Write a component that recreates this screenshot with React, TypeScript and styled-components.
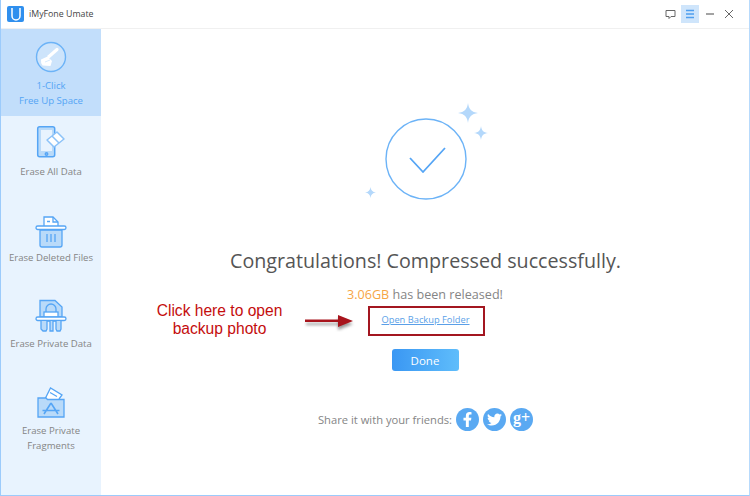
import React from "react";
import styled, { createGlobalStyle } from "styled-components";
import { FaFacebookF, FaTwitter } from "react-icons/fa";

const Global = createGlobalStyle`
  html, body { margin: 0; padding: 0; background: #fff; }
  body { font-family: "Open Sans", "Noto Sans", sans-serif; }
`;

const Window = styled.div`
  position: relative;
  width: 750px;
  height: 496px;
  box-sizing: border-box;
  border: 1px solid #9ccbfb;
  border-top: 0;
  border-right: 1px solid #b7dafc;
  display: flex;
  flex-direction: column;
  overflow: hidden;
  background: #fff;
`;
const TitleBar = styled.div`
  height: 29px;
  flex: none;
  display: flex;
  align-items: center;
  padding: 0 11px 0 6px;
  border-bottom: 1px solid #f0f0f0;
  box-sizing: border-box;
`;
const Logo = styled.div`
  width: 17px;
  height: 16px;
  border-radius: 2px;
  background: #2f8fee;
  display: flex;
  align-items: center;
  justify-content: center;
`;
const AppName = styled.span`
  margin-left: 5px;
  font-size: 8.8px;
  color: #444;
`;
const Controls = styled.div`
  margin-left: auto;
  display: flex;
  align-items: center;
  gap: 1.5px;
`;
const ControlButton = styled.div<{ $active?: boolean }>`
  width: 18px;
  height: 18px;
  display: flex;
  align-items: center;
  justify-content: center;
  background: ${(p) => (p.$active ? "#cfe5fb" : "transparent")};
`;
const Body = styled.div`
  flex: 1;
  display: flex;
  min-height: 0;
`;
const Sidebar = styled.nav`
  width: 100px;
  flex: none;
  background: #e8f3fe;
  display: flex;
  flex-direction: column;
`;
const NavItem = styled.div<{ $active?: boolean; $h: number; $top: number }>`
  height: ${(p) => p.$h}px;
  padding-top: ${(p) => p.$top}px;
  box-sizing: border-box;
  background: ${(p) => (p.$active ? "#c2defb" : "transparent")};
  color: ${(p) => (p.$active ? "#55a5f5" : "#858585")};
  display: flex;
  flex-direction: column;
  align-items: center;
`;
const NavIcon = styled.div<{ $gap: number }>`
  height: 34px;
  display: flex;
  align-items: center;
  justify-content: center;
  margin-bottom: ${(p) => p.$gap}px;
`;
const NavLabel = styled.div`
  font-size: 9.6px;
  line-height: 14.5px;
  text-align: center;
  white-space: nowrap;
`;
const Main = styled.main`
  flex: 1;
  display: flex;
  flex-direction: column;
  align-items: center;
  padding-top: 71px;
`;
const Hero = styled.div`
  height: 103px;
  display: flex;
  justify-content: center;
`;
const Title = styled.h1`
  margin: 44px 0 0 1px;
  font-size: 19.7px;
  line-height: 28px;
  font-weight: 400;
  color: #555;
`;
const Released = styled.div`
  margin-top: 11px;
  font-size: 12.6px;
  line-height: 17px;
  color: #858585;
`;
const Amount = styled.span`
  color: #f6a545;
`;
const BackupLink = styled.a`
  margin-top: 2px;
  padding-left: 1px;
  box-sizing: border-box;
  width: 116px;
  height: 29px;
  display: flex;
  align-items: center;
  justify-content: center;
  font-size: 9.3px;
  color: #5a9fe8;
  text-decoration: underline;
  white-space: nowrap;
`;
const DoneButton = styled.button`
  margin-top: 15px;
  width: 67px;
  height: 22px;
  border: 0;
  border-radius: 3px;
  padding: 0;
  background: linear-gradient(90deg, #3a97f3, #5fbdfb);
  color: #fff;
  font: 11.5px "Open Sans", sans-serif;
`;
const Share = styled.div`
  margin: 37px 0 0 1px;
  display: flex;
  align-items: center;
  gap: 4px;
  font-size: 11.2px;
  color: #858585;
`;
const ShareIcon = styled.div<{ $size?: number }>`
  width: 23px;
  height: 23px;
  border-radius: 50%;
  background: #5aa9f2;
  color: #fff;
  display: flex;
  align-items: center;
  justify-content: center;
  font-size: ${(p) => p.$size ?? 14}px;
`;
const GooglePlus = styled.span`
  font-family: "Liberation Serif", serif;
  font-weight: 700;
  font-size: 16px;
  line-height: 1;
  margin-top: -3px;
`;
const Annotation = styled.div`
  position: absolute;
  left: 149px;
  top: 302px;
  width: 139px;
  text-align: center;
  font-family: "Liberation Sans", Arial, sans-serif;
  font-size: 15.6px;
  line-height: 18px;
  color: #c40d0d;
`;
const Arrow = styled.svg`
  position: absolute;
  left: 303px;
  top: 308px;
`;
const Callout = styled.div`
  position: absolute;
  left: 367px;
  top: 306px;
  width: 117px;
  height: 30px;
  box-sizing: border-box;
  border: 2px solid #a31620;
`;

const blue = "#55a5f5";
const fill = "#b9daf9";

const items = [
  { l: ["1-Click", "Free Up Space"], h: 87, t: 11, g: 5, active: true, icon: (
    <svg width="32" height="32" viewBox="0 0 32 32" fill="none" stroke="#6cb3f7" strokeWidth="1.4">
      <circle cx="16" cy="16" r="14.500" fill="#cde4fb" />
      <path d="M14 15.500 22 8.500" stroke="#fff" strokeWidth="3.200" strokeLinecap="round" />
      <path d="M6 18.500 12.500 15.500 17 20 15.500 25 7.500 24.500Q5.500 22 6 18.500z" fill="#fff" stroke="none" />
      <path d="M10 21l5-2" stroke="#cde4fb" strokeWidth="0.800" />
    </svg>
  ) },
  { l: ["Erase All Data"], h: 86, t: 9, g: 6, icon: (
    <svg width="36" height="34" viewBox="0 0 36 34" fill="none" stroke={blue} strokeWidth="1.500">
      <rect x="4.700" y="1.700" width="17" height="30" rx="2" fill={fill} />
      <rect x="8" y="5" width="11" height="21" fill="#e8f3fe" stroke="none" />
      <circle cx="13.500" cy="29" r="1.200" />
      <path d="M14 15 24 7l7 7-10 8z" fill="#fff" stroke="#8cc2f8" strokeLinejoin="round" />
      <path d="M19 11l7 7" stroke="#8cc2f8" />
    </svg>
  ) },
  { l: ["Erase Deleted Files"], h: 86, t: 13, g: 2, icon: (
    <svg width="32" height="34" viewBox="0 0 32 34" fill="none" stroke={blue} strokeWidth="1.300">
      <path d="M9 11V2h9l5 5v4" fill="#fff" />
      <path d="M18 2v5h5M12 6.500h3" />
      <path d="M5 15h22v15a2 2 0 0 1-2 2H7a2 2 0 0 1-2-2z" fill={fill} />
      <rect x="1" y="11" width="30" height="3.500" rx="1.700" fill="#fff" />
      <path d="M12 19v8M16 19v8M20 19v8" />
    </svg>
  ) },
  { l: ["Erase Private Data"], h: 86, t: 11, g: 4, icon: (
    <svg width="32" height="34" viewBox="0 0 32 34" fill="none" stroke={blue} strokeWidth="1.300">
      <path d="M5 18V1.500h15L27 8v10z" fill={fill} />
      <path d="M11 13v-3a5 5 0 0 1 10 0v3" />
      <rect x="9" y="13" width="14" height="5" fill="#fff" />
      <rect x="1" y="18" width="30" height="3.500" rx="1.700" fill="#fff" />
      <path d="M6 22v8l2 2h3l1-2v-8h3v10h3V22h3v8l1 2h3l1-2v-8" fill={fill} />
    </svg>
  ) },
  { l: ["Erase Private", "Fragments"], h: 87, t: 11, g: 5, icon: (
    <svg width="28" height="32" viewBox="0 0 28 32" fill="none" stroke={blue} strokeWidth="1.300">
      <path d="M8 13 13.500 2 25 9l-3 4" fill="#fff" />
      <path d="M13 6.500l7 4" />
      <path d="M1 12h8l1.500 1.500H27V31H1z" fill={fill} />
      <path d="M14 17 7 28M14 17l7 11M5.500 24.500h17" strokeWidth="1.600" />
    </svg>
  ) },
];

const Sparkle = ({ s }: { s: number }) => (
  <svg width={s} height={s} viewBox="0 0 20 20"><path d="M10 0c.7 6 3.500 9.300 10 10-6.500.7-9.300 4-10 10-.7-6-3.500-9.300-10-10 6.500-.7 9.300-4 10-10z" fill="#b4d8fb" /></svg>
);

const HeroArt = styled.div`
  position: relative;
  width: 150px;
  height: 103px;
`;
const Spark = styled.div<{ $x: number; $y: number }>`
  position: absolute;
  left: ${(p) => p.$x}px;
  top: ${(p) => p.$y}px;
  line-height: 0;
`;
const Ring = styled.svg`
  position: absolute;
  left: 35px;
  top: 18px;
`;

export default function App() {
  return (
    <Window>
      <Global />
      <TitleBar>
        <Logo>
          <svg width="12" height="14" viewBox="0 0 12 14" fill="none" stroke="#fff" strokeWidth="1.500"><path d="M2 1v8a4 4 0 0 0 8 0V1" /></svg>
        </Logo>
        <AppName>iMyFone Umate</AppName>
        <Controls>
          <ControlButton>
            <svg width="11" height="11" viewBox="0 0 11 11" fill="none" stroke="#666" strokeWidth="1"><path d="M1 1.500h9v6H6L4 9.500v-2H1z" /></svg>
          </ControlButton>
          <ControlButton $active>
            <svg width="10" height="10" viewBox="0 0 10 10" stroke="#4f9fef" strokeWidth="1.300"><path d="M1 1.500h8M1 5h8M1 8.500h8" /></svg>
          </ControlButton>
          <ControlButton>
            <svg width="10" height="10" viewBox="0 0 10 10" stroke="#666" strokeWidth="1.200"><path d="M1 5h8" /></svg>
          </ControlButton>
          <ControlButton>
            <svg width="10" height="10" viewBox="0 0 10 10" stroke="#666" strokeWidth="1"><path d="M1 1l8 8M9 1l-8 8" /></svg>
          </ControlButton>
        </Controls>
      </TitleBar>
      <Body>
        <Sidebar>
          {items.map((it) => (
            <NavItem key={it.l[0]} $active={it.active} $h={it.h} $top={it.t}>
              <NavIcon $gap={it.g}>{it.icon}</NavIcon>
              {it.l.map((t) => <NavLabel key={t}>{t}</NavLabel>)}
            </NavItem>
          ))}
        </Sidebar>
        <Main>
          <Hero>
            <HeroArt>
              <Ring width="82" height="82" viewBox="0 0 82 82" fill="none">
                <circle cx="41" cy="41" r="40" stroke="#6cb3f7" strokeWidth="1.400" />
                <path d="M25 40 38 54 60 30" stroke="#55a5f5" strokeWidth="1.800" />
              </Ring>
              <Spark $x={108} $y={3}><Sparkle s={20} /></Spark>
              <Spark $x={124} $y={26}><Sparkle s={14} /></Spark>
              <Spark $x={15} $y={87}><Sparkle s={11} /></Spark>
            </HeroArt>
          </Hero>
          <Title>Congratulations! Compressed successfully.</Title>
          <Released><Amount>3.06GB</Amount> has been released!</Released>
          <BackupLink>Open Backup Folder</BackupLink>
          <DoneButton>Done</DoneButton>
          <Share>
            <span>Share it with your friends:</span>
            <ShareIcon $size={15}><FaFacebookF /></ShareIcon>
            <ShareIcon $size={15}><FaTwitter /></ShareIcon>
            <ShareIcon><GooglePlus>g+</GooglePlus></ShareIcon>
          </Share>
        </Main>
      </Body>
      <Annotation>Click here to open backup photo</Annotation>
      <Arrow width="56" height="24" viewBox="0 0 56 24">
        <defs><filter id="sh"><feGaussianBlur stdDeviation="1.500" /></filter></defs>
        <path d="M2 15h32v-5l15 6-15 6v-5H2z" fill="#999" filter="url(#sh)" />
        <path d="M1 11.500h33V7l15 6-15 6v-5H1z" fill="#a8141c" />
      </Arrow>
      <Callout />
    </Window>
  );
}
